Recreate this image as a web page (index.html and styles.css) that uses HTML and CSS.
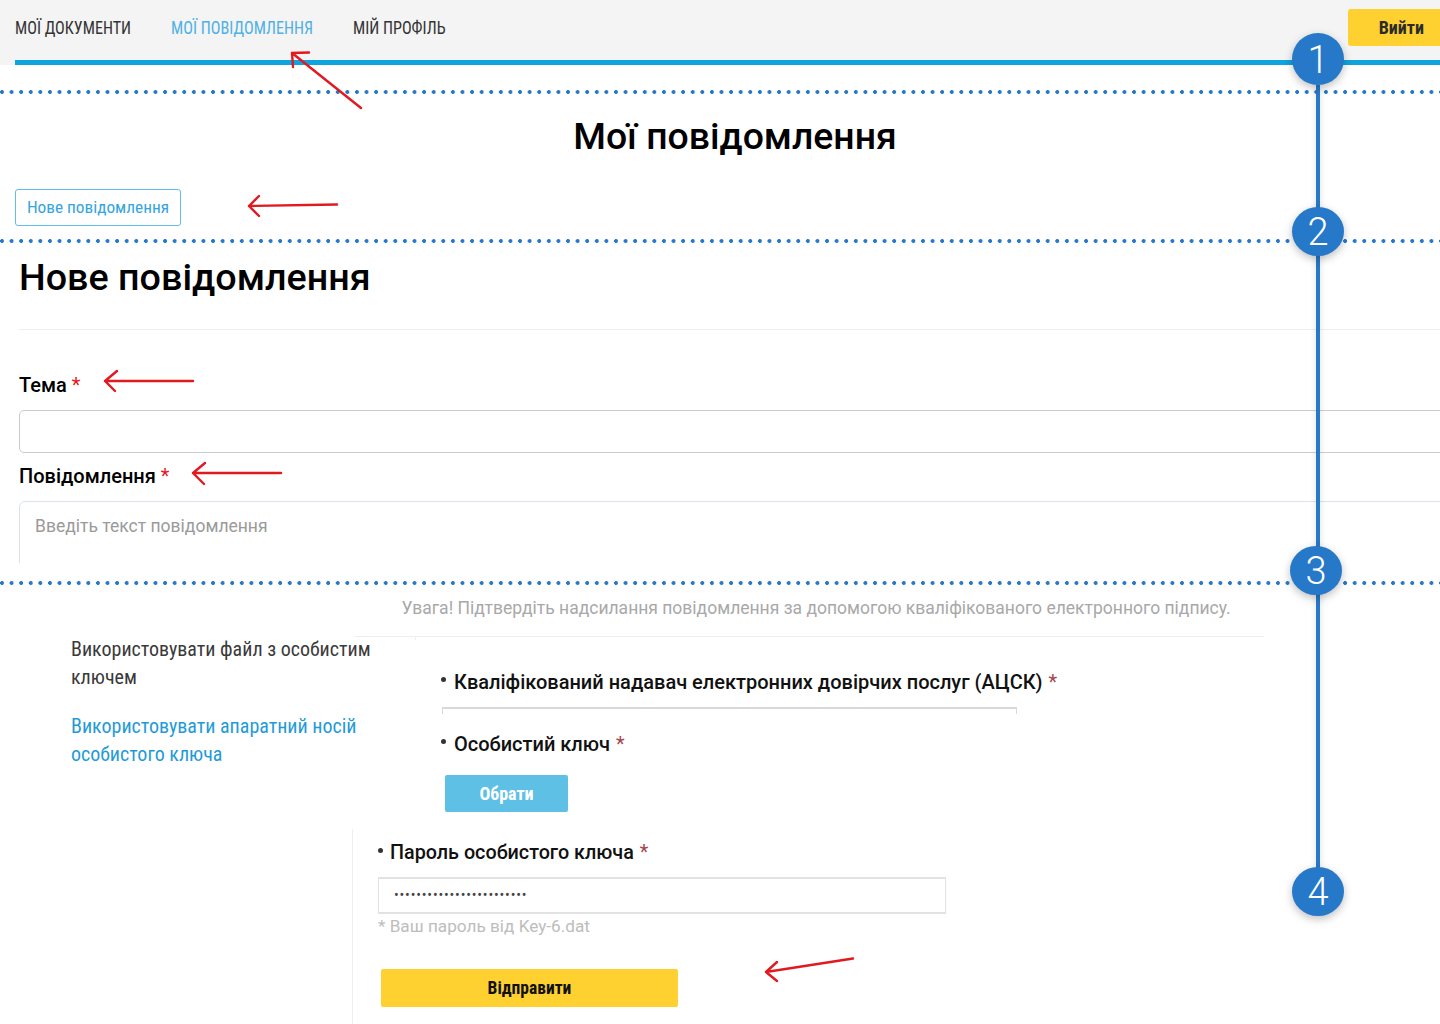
FILE: index.html
```html
<!DOCTYPE html>
<html lang="uk">
<head>
<meta charset="utf-8">
<title>Мої повідомлення</title>
<link rel="stylesheet" href="styles.css">
</head>
<body>
<div class="page">
  <header class="header">
    <nav class="nav">
      <a class="nav-link">МОЇ ДОКУМЕНТИ</a>
      <a class="nav-link nav-link-active">МОЇ ПОВІДОМЛЕННЯ</a>
      <a class="nav-link">МІЙ ПРОФІЛЬ</a>
      <button class="logout">Вийти</button>
    </nav>
    <div class="nav-line"></div>
  </header>
  <div class="dots dots-1"></div>
  <section class="messages">
    <h1 class="page-title">Мої повідомлення</h1>
    <button class="new-btn">Нове повідомлення</button>
  </section>
  <div class="dots dots-2"></div>
  <section class="form">
    <h2 class="form-title">Нове повідомлення</h2>
    <hr class="form-rule">
    <label class="label label-first">Тема <span class="req">*</span></label>
    <input class="input-theme" type="text">
    <label class="label label-second">Повідомлення <span class="req">*</span></label>
    <div class="area-clip"><textarea class="area" placeholder="Введіть текст повідомлення"></textarea></div>
  </section>
  <div class="dots dots-3"></div>
  <section class="sign">
    <p class="notice">Увага! Підтвердіть надсилання повідомлення за допомогою кваліфікованого електронного підпису.</p>
    <div class="notice-rule"></div>
    <div class="sign-cols">
      <ul class="sign-tabs">
        <li class="tab">Використовувати файл з особистим ключем</li>
        <li class="tab tab-link">Використовувати апаратний носій особистого ключа</li>
      </ul>
      <div class="sign-main">
        <div class="bullet-label bl-provider">Кваліфікований надавач електронних довірчих послуг (АЦСК) <span class="req-dim">*</span></div>
        <div class="select-clip"></div>
        <div class="bullet-label bl-key">Особистий ключ <span class="req-dim">*</span></div>
        <button class="choose">Обрати</button>
      </div>
    </div>
    <div class="password">
      <div class="bullet-label bl-pass">Пароль особистого ключа <span class="req-dim">*</span></div>
      <div class="pass-box">••••••••••••••••••••••••</div>
      <div class="pass-hint">* Ваш пароль від Key-6.dat</div>
      <button class="send">Відправити</button>
    </div>
  </section>

  <div class="rail"></div>
  <div class="step step-1">1</div>
  <div class="step step-2">2</div>
  <div class="step step-3">3</div>
  <div class="step step-4">4</div>

  <svg class="arrows" width="1440" height="1024" viewBox="0 0 1440 1024" fill="none" stroke="#e01a1f" stroke-width="2.4" stroke-linecap="round" stroke-linejoin="round">
    <path d="M361 108L292 53M309 52.500L292 53L293 67"/>
    <path d="M337 204.500L249 206M259 196L249 206L259 216"/>
    <path d="M193 381L105 381M117 371L105 381L115 391"/>
    <path d="M281 473L193 473M205 463L193 473L204 484"/>
    <path d="M853 958.500L766 972M777 962L766 972L777 981"/>
  </svg>
</div>
</body>
</html>
```
FILE: styles.css
```css
* { box-sizing: border-box; }
html, body { margin: 0; padding: 0; background: #fff; }
body { font-family: Roboto, "Open Sans", sans-serif; color: #000; }
.page { position: relative; width: 1440px; height: 1024px; overflow: hidden; }

.header { height: 65px; background: #f4f4f4; }
.nav { height: 60px; display: flex; align-items: center; padding-left: 15px; gap: 40px; }
.nav-link { display: inline-block; margin-top: -4px; font-size: 16.150px; font-stretch: 75%; color: #333; white-space: nowrap; line-height: 20px; transform: scaleY(1.12); }
.nav-link-active { color: #4fb1e4; }
.logout { margin-left: auto; width: 110px; flex: none; height: 37px; margin-top: -5px; margin-right: -18px; padding: 0 34px 0 0; border: 0; border-radius: 3px; background: #ffd130; color: #2b2b2b; font: 700 18px Roboto, sans-serif; font-stretch: 75%; text-align: right; }
.nav-line { height: 5px; margin-left: 15px; background: #0ea4dd; }

.dots { height: 4px; background-image: radial-gradient(circle at 2px 2px, #2678c8 1.700px, transparent 2.200px); background-size: 9.600px 4px; background-repeat: repeat-x; }
.dots-1 { margin-top: 25px; }
.dots-2 { margin-top: 13px; }
.dots-3 { margin-top: 18px; }

.messages { padding-left: 15px; }
.page-title { margin: 21px 0 0; padding-left: 15px; text-align: center; font-size: 37.400px; font-weight: 500; line-height: 43px; color: #000; }
.new-btn { display: block; margin-top: 31px; width: 166px; height: 37px; padding: 0 0 2px; border: 1px solid #62bde9; border-radius: 3px; background: #fff; color: #35a5de; font: 400 17.300px Roboto, sans-serif; font-stretch: 75%; }

.form { padding-left: 19px; }
.form-title { margin: 13px 0 0; font-size: 37.700px; font-weight: 500; line-height: 42px; }
.form-rule { margin: 31px 0 0; border: 0; height: 1px; background: #eee; }
.label { display: block; font-size: 20px; font-weight: 500; line-height: 24px; }
.label-first { margin-top: 43px; }
.label-second { margin-top: 11px; }
.req { color: #e8141c; font-weight: 400; }
.input-theme { display: block; width: 1500px; height: 43px; margin-top: 13px; border: 1px solid #ccc; border-radius: 5px; background: #fff; }
.area-clip { margin-top: 13px; height: 62px; overflow: hidden; }
.area { display: block; width: 1500px; height: 120px; padding: 12px 15px; border: 1px solid #dde3ea; border-radius: 6px; font: 400 17.500px/24px Roboto, sans-serif; resize: none; }
.area::placeholder { color: #9a9a9a; opacity: 1; }

.sign { position: relative; }
.notice { margin: 11px 0 0; padding-left: 401.500px; font-size: 17.500px; line-height: 24px; color: #a8a8a8; white-space: nowrap; }
.notice-rule { position: relative; margin: 16px 0 0 355px; width: 909px; height: 1px; background: #eee; }
.notice-rule::after { content: ""; position: absolute; left: 60px; top: 0; width: 1px; height: 4px; background: #eee; }
.sign-cols { display: flex; }
.sign-tabs { list-style: none; margin: -2px 0 0; padding: 0 0 0 71px; width: 441px; flex: none; }
.tab { width: 310px; font-size: 20px; font-stretch: 75%; line-height: 28px; color: #3a3a3a; }
.tab-link { margin-top: 21px; color: #1f9bd8; }
.sign-main { flex: 1; }
.bullet-label { position: relative; padding-left: 13px; font-size: 20px; font-weight: 500; line-height: 24px; color: #111; white-space: nowrap; }
.bullet-label::before { content: ""; position: absolute; left: 0; top: 7px; width: 5px; height: 5px; border-radius: 50%; background: #333; }
.req-dim { margin-left: 1px; color: #a5454d; font-weight: 400; }
.bl-provider { margin-top: 33px; }
.select-clip { width: 575px; height: 7px; margin: 13px 0 0 1px; border: 2px solid #d9d9d9; border-bottom: 0; border-width: 1px 1px 0; border-top-width: 2px; }
.bl-key { margin-top: 18px; }
.choose { display: block; width: 123px; height: 37px; margin: 19px 0 0 4px; padding: 0; border: 0; border-radius: 2px; background: #5fc0e6; color: #fff; font: 700 18px Roboto, sans-serif; font-stretch: 75%; }

.password { margin: 17px 0 0 352px; padding: 12px 0 0 25px; height: 195px; border-left: 1px solid #eee; }
.bl-pass { padding-left: 12px; font-size: 19.750px; }
.pass-box { width: 568px; height: 37px; margin-top: 12px; padding-left: 15px; border: 2px solid #e2e2e2; border-left-width: 1px; border-right-width: 1px; font-size: 14px; line-height: 32px; letter-spacing: 0.830px; color: #444; }
.pass-hint { font-size: 17.200px; line-height: 24px; color: #bdbdbd; }
.send { display: block; width: 297px; height: 38px; margin: 31px 0 0 3px; padding: 0; border: 0; border-radius: 2px; background: #ffd130; color: #111; font: 700 17.500px Roboto, sans-serif; font-stretch: 75%; }

.rail { position: absolute; left: 1316px; top: 85px; width: 4px; height: 785px; background: #2678c8; box-shadow: 0 0 6px rgba(0,0,0,.15); }
.step { position: absolute; width: 52px; height: 49px; display: flex; align-items: center; justify-content: center; border-radius: 50%; background: #2678c8; color: #fff; font-size: 38px; font-weight: 300; line-height: 1; box-shadow: 0 3px 8px rgba(0,0,0,.25); }
.step-1 { left: 1292px; top: 33px; height: 52px; padding-top: 2px; }
.step-2 { left: 1292px; top: 207px; }
.step-3 { left: 1290px; top: 546px; }
.step-4 { left: 1292px; top: 867px; }

.arrows { position: absolute; left: 0; top: 0; pointer-events: none; }
```
